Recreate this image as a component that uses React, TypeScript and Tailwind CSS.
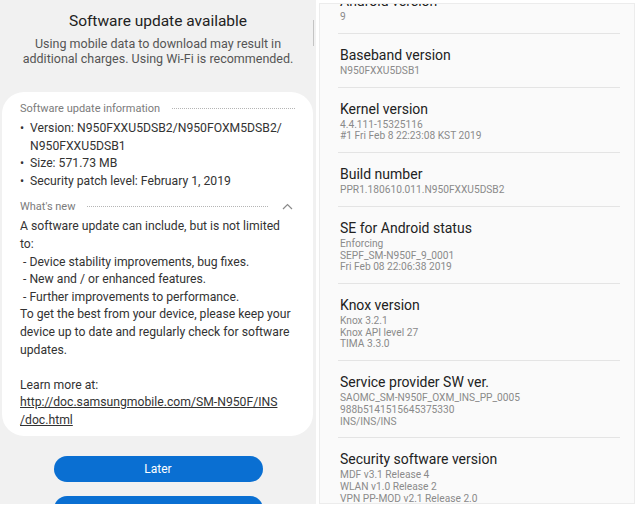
import React from 'react';

type Info = { title: string; lines: string[] };

const infos: Info[] = [
  { title: 'Baseband version', lines: ['N950FXXU5DSB1'] },
  { title: 'Kernel version', lines: ['4.4.111-15325116', '#1 Fri Feb 8 22:23:08 KST 2019'] },
  { title: 'Build number', lines: ['PPR1.180610.011.N950FXXU5DSB2'] },
  { title: 'SE for Android status', lines: ['Enforcing', 'SEPF_SM-N950F_9_0001', 'Fri Feb 08 22:06:38 2019'] },
  { title: 'Knox version', lines: ['Knox 3.2.1', 'Knox API level 27', 'TIMA 3.3.0'] },
  { title: 'Service provider SW ver.', lines: ['SAOMC_SM-N950F_OXM_INS_PP_0005', '988b5141515645375330', 'INS/INS/INS'] },
  { title: 'Security software version', lines: ['MDF v3.1 Release 4', 'WLAN v1.0 Release 2', 'VPN PP-MOD v2.1 Release 2.0'] },
];

const InfoItem: React.FC<{ item: Info; last?: boolean }> = ({ item, last }) => (
  <div>
    <div className="pl-[20px] pt-[12px] pb-[10.3px]">
      <div className="text-[14px] leading-[18px] text-[#222]">{item.title}</div>
      <div className="mt-[1px]">
        {item.lines.map((l) => (
          <div key={l} className="text-[10.2px] leading-[11.6px] text-[#8a8a8a]">
            {l}
          </div>
        ))}
      </div>
    </div>
    {!last && <div className="ml-[18px] mr-[14px] h-px bg-[#e4e4e4]" />}
  </div>
);

const SectionLabel: React.FC<{ label: string; chevron?: boolean }> = ({ label, chevron }) => (
  <div className="flex items-center gap-[12px] h-[17px]">
    <span className="text-[11px] text-[#7b7b7b] whitespace-nowrap">{label}</span>
    <div className="flex-1 border-t border-dotted border-[#b5b5b5]" />
    {chevron ? (
      <svg width="11" height="7" viewBox="0 0 11 7" className="ml-[2px]">
        <path d="M1 6 L5.5 1.5 L10 6" fill="none" stroke="#8a8a8a" strokeWidth="1.2" />
      </svg>
    ) : null}
  </div>
);

export default function App() {
  return (
    <div
      className="w-[637px] h-[507px] bg-white flex overflow-hidden"
      style={{ fontFamily: 'Roboto, "Noto Sans", sans-serif' }}
    >
      {/* Left: update dialog */}
      <div className="relative w-[316px] h-[504px] bg-[#f1f1f1] overflow-hidden flex flex-col items-center">
        {/* scroll indicator */}
        <div className="absolute right-[2px] top-[20px] w-px h-[26px] bg-[#c4c4c4]" />

        <div className="pt-[10px] text-[15.5px] leading-[22px] text-[#222]">Software update available</div>
        <div className="mt-[4px] text-[12.5px] leading-[15px] text-[#555] text-center">
          Using mobile data to download may result in
          <br />
          additional charges. Using Wi-Fi is recommended.
        </div>

        <div className="mt-[26px] shrink-0 self-start ml-[2px] w-[311px] h-[344px] bg-white rounded-[22px] pl-[18px] pr-[12px] pt-[8px] text-[12.2px] leading-[17.6px] text-[#333]">
          <div className="pr-[6px]">
            <SectionLabel label="Software update information" />
          </div>
          <div className="mt-[3px]">
            <div className="flex">
              <span className="w-[10px]">•</span>
              <span>
                Version: N950FXXU5DSB2/N950FOXM5DSB2/
                <br />
                N950FXXU5DSB1
              </span>
            </div>
            <div className="flex">
              <span className="w-[10px]">•</span>
              <span>Size: 571.73 MB</span>
            </div>
            <div className="flex">
              <span className="w-[10px]">•</span>
              <span>Security patch level: February 1, 2019</span>
            </div>
          </div>
          <div className="mt-[8px] pr-[8px]">
            <SectionLabel label="What's new" chevron />
          </div>
          <div className="mt-[3px]">
            <div>
              A software update can include, but is not limited
              <br />
              to:
            </div>
            <div>&nbsp;- Device stability improvements, bug fixes.</div>
            <div>&nbsp;- New and / or enhanced features.</div>
            <div>&nbsp;- Further improvements to performance.</div>
            <div>
              To get the best from your device, please keep your
              <br />
              device up to date and regularly check for software
              <br />
              updates.
            </div>
            <div>&nbsp;</div>
            <div>Learn more at:</div>
            <div className="underline">
              http://doc.samsungmobile.com/SM-N950F/INS
              <br />
              /doc.html
            </div>
          </div>
        </div>

        <button className="mt-[20px] w-[209px] h-[26px] shrink-0 rounded-full bg-[#0a6fd2] text-white text-[12px]">
          Later
        </button>
        <button className="mt-[14px] w-[209px] h-[26px] shrink-0 rounded-full bg-[#0a6fd2]" aria-label="Install now" />
      </div>

      {/* Right: software information */}
      <div className="ml-[3px] mt-[3px] w-[316px] h-[501px] bg-[#fafafa] border border-[#ececec] overflow-hidden">
        <div className="-mt-[24px]">
          <InfoItem item={{ title: 'Android version', lines: ['9'] }} />
          {infos.map((it, i) => (
            <InfoItem key={it.title} item={it} last={i === infos.length - 1} />
          ))}
        </div>
      </div>
    </div>
  );
}
